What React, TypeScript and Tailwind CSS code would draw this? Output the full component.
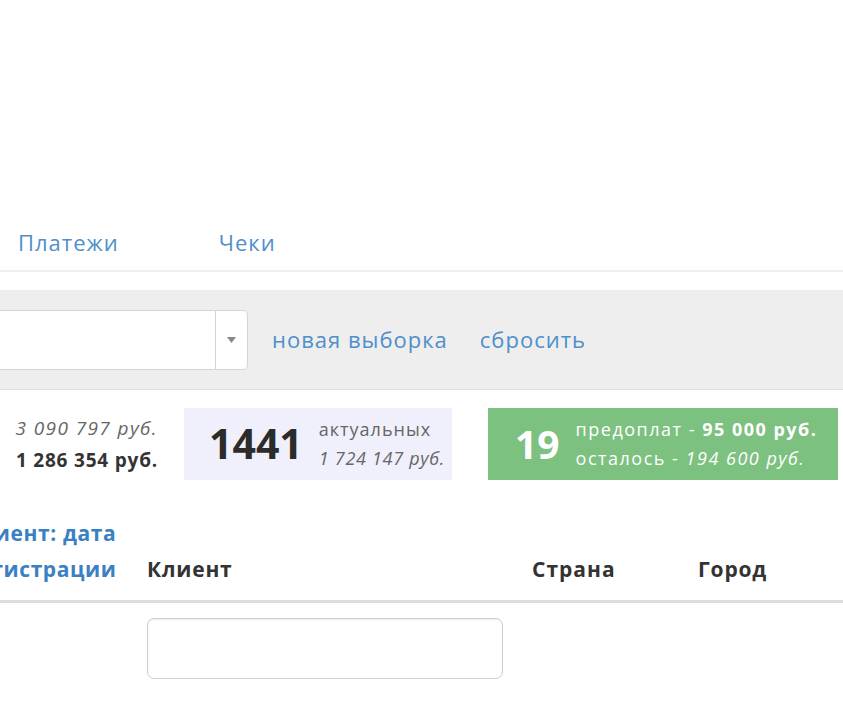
// Payments list — filters, summary and table header

function Tabs() {
  return (
    <div className="flex items-center h-[54px] pb-[4px] border-b-2 border-[#efefef] text-[22px] tracking-[1px] text-[#4f8fca]">
      <span className="ml-[18px]">Платежи</span>
      <span className="ml-[100px]">Чеки</span>
    </div>
  );
}

function FilterBar() {
  return (
    <div className="mt-[18px] h-[100px] bg-[#eeeeee] border-b border-[#dedede] flex items-center">
      <div className="-ml-[4px] w-[252px] h-[60px] bg-white border border-[#d4d4d4] rounded-[5px] flex">
        <div className="flex-1 border-r border-[#d4d4d4]" />
        <div className="w-[31px] flex items-center justify-center">
          <svg width="9" height="6" viewBox="0 0 9 6">
            <path d="M0 0 L9 0 L4.5 6 Z" fill="#888" />
          </svg>
        </div>
      </div>
      <span className="ml-[24px] text-[22px] tracking-[1px] text-[#4f8fca]">новая выборка</span>
      <span className="ml-[32px] text-[22px] tracking-[1px] text-[#4f8fca]">сбросить</span>
    </div>
  );
}

function Stats() {
  return (
    <div className="mt-[18px] flex items-stretch h-[72px]">
      <div className="w-[158px] flex flex-col items-end justify-center text-[19px] leading-[32px]">
        <span className="italic text-[#666] tracking-[1.4px]">3 090 797 руб.</span>
        <span className="font-bold text-[#333] tracking-[0.8px]">1 286 354 руб.</span>
      </div>
      <div className="ml-[26px] w-[268px] bg-[#f0f0fc] flex items-center pl-[25px]">
        <span className="text-[41px] font-bold text-[#2b2b2b]">1441</span>
        <div className="ml-[16px] flex flex-col text-[18px] leading-[29px] text-[#666]">
          <span className="tracking-[1px]">актуальных</span>
          <span className="italic tracking-[0.7px]">1 724 147 руб.</span>
        </div>
      </div>
      <div className="ml-[36px] w-[350px] bg-[#7cc17f] flex items-center pl-[27px] text-white">
        <span className="text-[39px] font-bold">19</span>
        <div className="ml-[16px] flex flex-col text-[18px] leading-[29px] tracking-[1.5px]">
          <span>
            предоплат - <b className="font-bold">95 000 руб.</b>
          </span>
          <span>
            осталось - <i>194 600 руб.</i>
          </span>
        </div>
      </div>
    </div>
  );
}

function TableHead() {
  return (
    <div className="mt-[31px] flex items-end h-[92px] pb-[13px] border-b-[3px] border-[#dddddd] text-[21px] font-bold leading-[36px] tracking-[0.6px]">
      <div className="-ml-[34px] w-[181px] text-[#3a80c2]">
        Клиент: дата
        <br />
        регистрации
      </div>
      <div className="w-[385px] text-[#333] tracking-[0.8px]">Клиент</div>
      <div className="w-[166px] text-[#333] tracking-[1px]">Страна</div>
      <div className="text-[#333] tracking-[0.8px]">Город</div>
    </div>
  );
}

export default function App() {
  return (
    <div
      className="w-[843px] h-[704px] overflow-hidden bg-white pt-[218px]"
      style={{ fontFamily: '"Open Sans", "Noto Sans", sans-serif' }}
    >
      <Tabs />
      <FilterBar />
      <Stats />
      <TableHead />
      <div className="mt-[15px] ml-[147px] w-[356px] h-[61px] rounded-[7px] border border-[#cfcfcf] shadow-[inset_0_1px_2px_rgba(0,0,0,0.08)]" />
    </div>
  );
}
